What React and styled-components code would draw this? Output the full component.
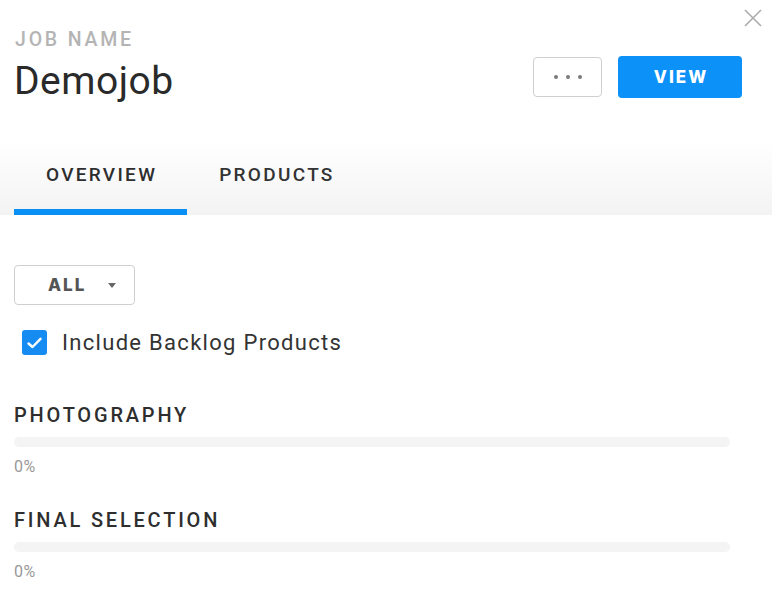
import React from "react";
import styled, { createGlobalStyle } from "styled-components";

const Global = createGlobalStyle`
  html, body { margin: 0; padding: 0; background: #fff; }
  body { font-family: Roboto, "Noto Sans", Arial, sans-serif; -webkit-font-smoothing: antialiased; }
  * { box-sizing: border-box; }
`;

const Panel = styled.div`
  position: relative;
  width: 772px;
  height: 594px;
  background: #fff;
  overflow: hidden;
`;

const CloseButton = styled.button`
  position: absolute;
  top: 9px;
  right: 10px;
  width: 18px;
  height: 18px;
  padding: 0;
  border: none;
  background: transparent;
  cursor: pointer;
  display: flex;
`;

const Header = styled.header`
  display: flex;
  justify-content: space-between;
  align-items: flex-start;
  padding: 29px 30px 0 14px;
  height: 140px;
`;

const TitleBlock = styled.div`
  display: flex;
  flex-direction: column;
`;

const Label = styled.div`
  font-size: 19.5px;
  line-height: 22px;
  font-weight: 500;
  letter-spacing: 2.8px;
  color: #b4b4b4;
  margin-left: 1px;
`;

const Title = styled.h1`
  margin: 7px 0 0;
  font-size: 39px;
  line-height: 46px;
  font-weight: 400;
  color: #2a2a2a;
  letter-spacing: 0.5px;
`;

const Actions = styled.div`
  display: flex;
  gap: 16px;
  margin-top: 27px;
`;

const MoreButton = styled.button`
  width: 69px;
  height: 40px;
  margin-top: 1px;
  border: 1px solid #cfcfcf;
  border-radius: 4px;
  background: #fff;
  display: flex;
  align-items: center;
  justify-content: center;
  gap: 8px;
  padding: 0;
`;

const Dot = styled.span`
  width: 4px;
  height: 4px;
  border-radius: 50%;
  background: #7a7a7a;
`;

const PrimaryButton = styled.button`
  width: 124px;
  height: 42px;
  border: none;
  border-radius: 4px;
  background: #0b91f8;
  color: #fff;
  font-family: Inter, "Open Sans", sans-serif;
  font-weight: 800;
  font-size: 17px;
  letter-spacing: 2px;
  padding: 0 0 0 2px;
`;

const TabBar = styled.nav`
  display: flex;
  height: 75px;
  padding-left: 14px;
  background: linear-gradient(to bottom, #ffffff 0%, #f3f3f3 100%);
`;

const Tab = styled.div`
  height: 75px;
  padding: 25px 30px 0 32px;
  font-size: 19px;
  line-height: 20px;
  font-weight: 500;
  letter-spacing: 2.3px;
  color: ${(p) => (p.$active ? "#2e2e2e" : "#333")};
  border-bottom: 6px solid ${(p) => (p.$active ? "#0a8ff5" : "transparent")};
`;

const Content = styled.main`
  padding: 50px 42px 0 14px;
`;

const Dropdown = styled.button`
  width: 121px;
  height: 40px;
  border: 1px solid #cfcfcf;
  border-radius: 4px;
  background: #fff;
  display: flex;
  align-items: center;
  padding: 0 0 0 33px;
  gap: 22px;
  font-family: Inter, "Open Sans", sans-serif;
  font-weight: 800;
  font-size: 17px;
  letter-spacing: 2px;
  color: #555;
`;

const Caret = styled.span`
  width: 0;
  height: 0;
  border-left: 4px solid transparent;
  border-right: 4px solid transparent;
  border-top: 5px solid #666;
  margin-top: 1px;
`;

const CheckRow = styled.label`
  display: flex;
  align-items: center;
  gap: 15px;
  margin: 25px 0 0 8px;
  height: 25px;
`;

const CheckBox = styled.span`
  width: 25px;
  height: 25px;
  border-radius: 3px;
  background: #168cf2;
  display: flex;
  align-items: center;
  justify-content: center;
`;

const CheckText = styled.span`
  font-size: 22px;
  line-height: 25px;
  color: #333;
  letter-spacing: 1.3px;
`;

const Sections = styled.div`
  margin-top: 48px;
  display: flex;
  flex-direction: column;
  gap: 32px;
`;

const Section = styled.section`
  display: flex;
  flex-direction: column;
`;

const SectionTitle = styled.h2`
  margin: 0;
  font-size: 20px;
  line-height: 24px;
  font-weight: 500;
  letter-spacing: 2.8px;
  color: #2e2e2e;
`;

const Track = styled.div`
  margin-top: 10px;
  height: 10px;
  border-radius: 5px;
  background: #f4f4f4;
  overflow: hidden;
`;

const Fill = styled.div`
  height: 100%;
  background: #0a8ff5;
`;

const Percent = styled.div`
  margin-top: 11px;
  font-size: 16px;
  line-height: 18px;
  color: #999;
  letter-spacing: 0.4px;
`;

const sections = [
  { name: "PHOTOGRAPHY", value: 0 },
  { name: "FINAL SELECTION", value: 0 },
];

export default function App() {
  return (
    <>
      <Global />
      <Panel>
        <CloseButton aria-label="Close">
          <svg width="18" height="18" viewBox="0 0 18 18">
            <path d="M1 1 L17 17 M17 1 L1 17" stroke="#ababab" strokeWidth="1.6" fill="none" />
          </svg>
        </CloseButton>
        <Header>
          <TitleBlock>
            <Label>JOB NAME</Label>
            <Title>Demojob</Title>
          </TitleBlock>
          <Actions>
            <MoreButton aria-label="More">
              <Dot />
              <Dot />
              <Dot />
            </MoreButton>
            <PrimaryButton>VIEW</PrimaryButton>
          </Actions>
        </Header>
        <TabBar>
          <Tab $active>OVERVIEW</Tab>
          <Tab>PRODUCTS</Tab>
        </TabBar>
        <Content>
          <Dropdown>
            ALL
            <Caret />
          </Dropdown>
          <CheckRow>
            <CheckBox>
              <svg width="15" height="12" viewBox="0 0 15 12">
                <path d="M1.5 6.5 L5.5 10 L13.5 1.8" stroke="#fff" strokeWidth="2.4" fill="none" strokeLinecap="round" strokeLinejoin="round" />
              </svg>
            </CheckBox>
            <CheckText>Include Backlog Products</CheckText>
          </CheckRow>
          <Sections>
            {sections.map((s) => (
              <Section key={s.name}>
                <SectionTitle>{s.name}</SectionTitle>
                <Track>
                  <Fill style={{ width: `${s.value}%` }} />
                </Track>
                <Percent>{s.value}%</Percent>
              </Section>
            ))}
          </Sections>
        </Content>
      </Panel>
    </>
  );
}
